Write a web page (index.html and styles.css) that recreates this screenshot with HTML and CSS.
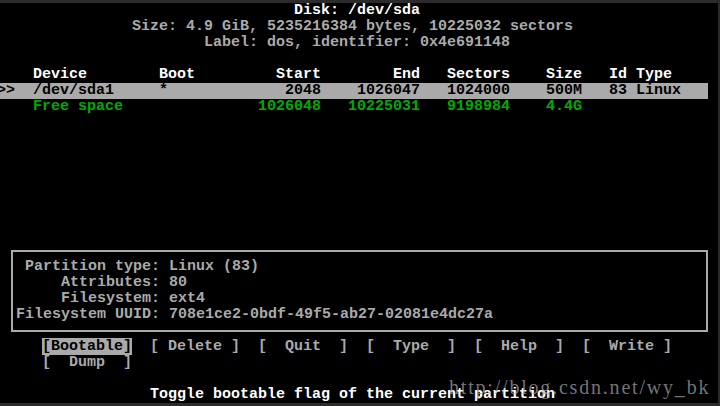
FILE: index.html
```html
<!DOCTYPE html>
<html>
<head>
<meta charset="utf-8">
<link rel="stylesheet" href="styles.css">
</head>
<body>
<div class="frame">
  <div class="screen">
    <div class="term">
      <div class="row bright i33">Disk: /dev/sda</div>
      <div class="row i15">Size: 4.9 GiB, 5235216384 bytes, 10225032 sectors</div>
      <div class="row i23">Label: dos, identifier: 0x4e691148</div>
      <div class="row"></div>
      <div class="row bright i4">Device        Boot         Start        End   Sectors    Size   Id Type</div>
      <div class="row"><span class="sel">&gt;&gt;  /dev/sda1     *             2048    1026047   1024000    500M   83 Linux</span></div>
      <div class="row green i4">Free space               1026048   10225031   9198984    4.4G</div>
      <div class="row"></div>
      <div class="row"></div>
      <div class="row"></div>
      <div class="row"></div>
      <div class="row"></div>
      <div class="row"></div>
      <div class="row"></div>
      <div class="row"></div>
      <div class="box">
        <div class="row i1">Partition type: Linux (83)</div>
        <div class="row i5">Attributes: 80</div>
        <div class="row i5">Filesystem: ext4</div>
        <div class="row">Filesystem UUID: 708e1ce2-0bdf-49f5-ab27-02081e4dc27a</div>
      </div>
      <div class="row i5"><span class="btn-sel">[Bootable]</span>  [ Delete ]  [  Quit  ]  [  Type  ]  [  Help  ]  [  Write ]</div>
      <div class="row i5">[  Dump  ]</div>
      <div class="row"></div>
      <div class="row bright i17">Toggle bootable flag of the current partition</div>
    </div>
    <div class="watermark">http://blog.csdn.net/wy_bk</div>
  </div>
</div>
</body>
</html>
```
FILE: styles.css
```css
html, body {
  margin: 0;
  padding: 0;
  background: #2b2b2b;
  width: 720px;
  height: 406px;
  overflow: hidden;
}
.frame {
  padding-top: 3px;
}
.screen {
  position: relative;
  width: 718px;
  height: 400px;
  background: #000;
  overflow: hidden;
}
.term {
  margin-left: -3px;
  font-family: "Liberation Mono", monospace;
  font-size: 15px;
  font-weight: bold;
  color: #aaaaaa;
}
.row {
  height: 16px;
  line-height: 16px;
  white-space: pre;
}
.i1 { padding-left: 9px; }
.i4 { padding-left: 36px; }
.i5 { padding-left: 45px; }
.i15 { padding-left: 135px; }
.i17 { padding-left: 153px; }
.i23 { padding-left: 207px; }
.i33 { padding-left: 297px; }
.bright {
  color: #ffffff;
}
.green {
  color: #00aa00;
}
.sel {
  display: inline-block;
  width: 711px;
  background: #aaaaaa;
  color: #000;
  height: 16px;
}
.btn-sel {
  background: #aaaaaa;
  color: #000;
}
.box {
  margin: 7px 0 7px 14px;
  width: 690px;
  height: 71px;
  border: 2px solid #aaaaaa;
  padding: 7px 0 0 3px;
}
.watermark {
  position: absolute;
  left: 449px;
  top: 372px;
  font-family: "Liberation Serif", serif;
  font-size: 20px;
  letter-spacing: 1.8px;
  color: rgba(170, 170, 170, 0.7);
  white-space: pre;
  line-height: 24px;
}
```
